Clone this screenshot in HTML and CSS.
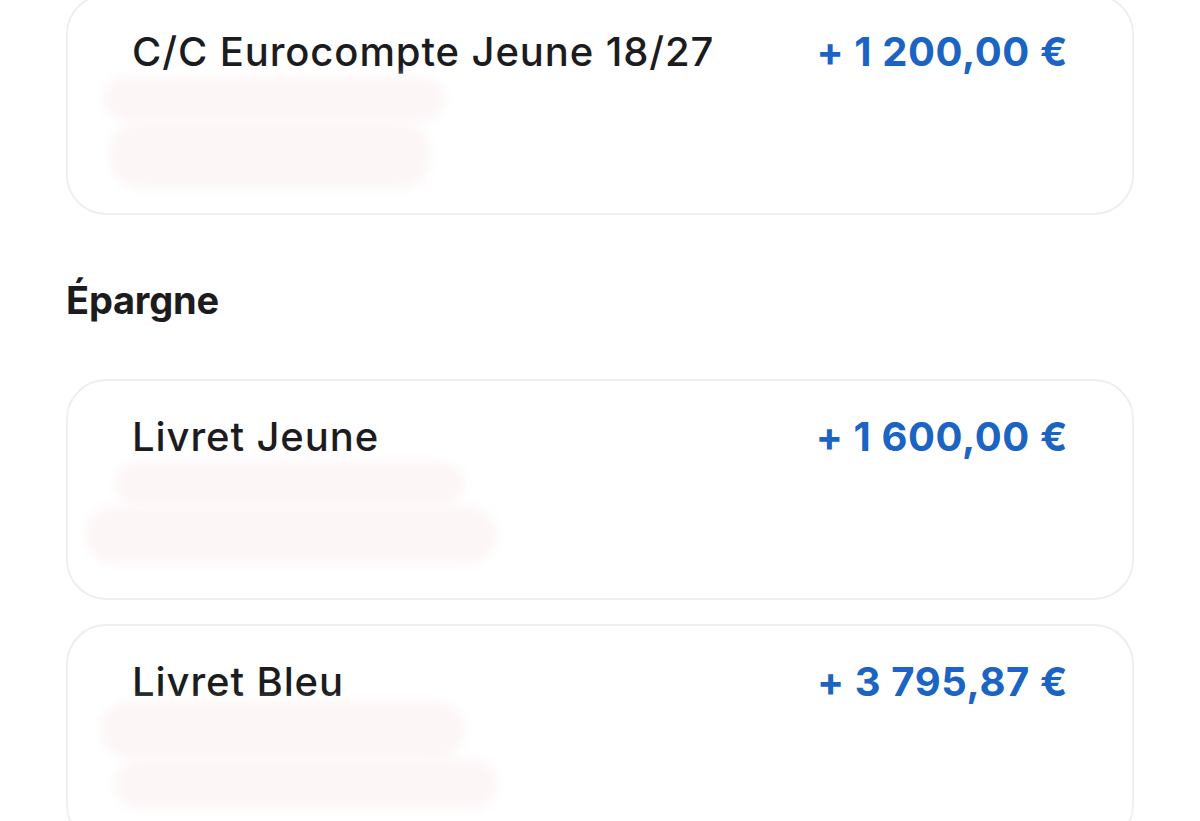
FILE: index.html
```html
<!DOCTYPE html>
<html lang="fr">
<head>
<meta charset="UTF-8">
<meta name="viewport" content="width=device-width, initial-scale=1.0">
<title>Comptes</title>
<link rel="stylesheet" href="styles.css">
</head>
<body>

<div class="accounts">
    <div class="card">
        <div class="row">
            <span class="name">C/C Eurocompte Jeune 18/27</span>
            <span class="amount">+ 1 200,00 €</span>
        </div>
        <div class="redact first">
            <div class="smudge top"></div>
            <div class="smudge bottom"></div>
        </div>
    </div>

    <h2 class="section-title">Épargne</h2>

    <div class="card">
        <div class="row">
            <span class="name">Livret Jeune</span>
            <span class="amount">+ 1 600,00 €</span>
        </div>
        <div class="redact second">
            <div class="smudge top"></div>
            <div class="smudge bottom"></div>
        </div>
    </div>

    <div class="card">
        <div class="row">
            <span class="name">Livret Bleu</span>
            <span class="amount">+ 3 795,87 €</span>
        </div>
        <div class="redact third">
            <div class="smudge top"></div>
            <div class="smudge bottom"></div>
        </div>
    </div>
</div>

</body>
</html>
```

FILE: styles.css
```css
body {
    margin: 0;
    background: #ffffff;
    font-family: Inter, "Noto Sans", sans-serif;
    color: #1c1c1e;
    overflow: hidden;
}
.accounts {
    margin-top: -6px;
    padding: 0 66px;
}
.card {
    height: 221px;
    box-sizing: border-box;
    border: 2px solid #efefef;
    border-radius: 40px;
    padding: 33px 64px 0 64px;
    margin-bottom: 24px;
    overflow: hidden;
}
.row {
    display: flex;
    justify-content: space-between;
    align-items: baseline;
    line-height: 46px;
}
.name {
    font-size: 40px;
    font-weight: 500;
    letter-spacing: 0.9px;
}
.amount {
    font-size: 40px;
    font-weight: 700;
    letter-spacing: 0.6px;
    color: #1b64c3;
}
.section-title {
    margin: 62px 0 56px;
    font-size: 38px;
    font-weight: 700;
    line-height: 46px;
    letter-spacing: -0.2px;
}
.redact {
    margin-top: 2px;
}
.smudge {
    background: #fdf6f7;
    border-radius: 24px;
    filter: blur(5px);
}
.first .top { width: 342px; height: 44px; margin-left: -29px; }
.first .bottom { width: 320px; height: 68px; margin-left: -22px; border-radius: 30px; }
.second .top { width: 350px; height: 44px; margin-left: -17px; }
.second .bottom { width: 412px; height: 58px; margin-left: -47px; border-radius: 30px; }
.third .top { width: 365px; height: 58px; margin-left: -32px; margin-top: -6px; border-radius: 30px; }
.third .bottom { width: 382px; height: 50px; margin-left: -17px; }
```
